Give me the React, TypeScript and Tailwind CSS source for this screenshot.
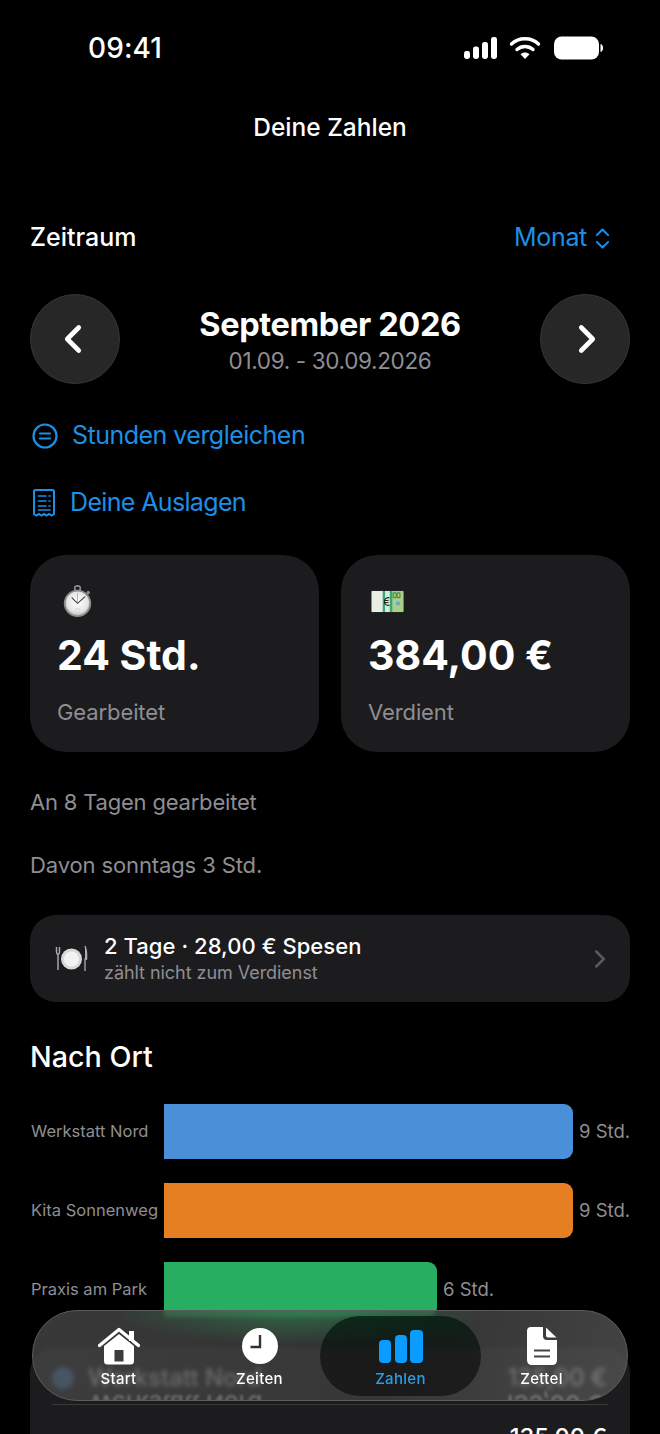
import React from "react";
import { ChevronLeft, ChevronRight, ChevronsUpDown } from "lucide-react";

const font = { fontFamily: "Inter, 'Liberation Sans', sans-serif" };

function Stopwatch() {
  return (
    <svg className="ml-[3px]" width="31" height="33" viewBox="0 0 34 36">
      <defs>
        <radialGradient id="face" cx="50%" cy="45%" r="55%">
          <stop offset="0%" stopColor="#ffffff" />
          <stop offset="80%" stopColor="#e4e4e4" />
          <stop offset="100%" stopColor="#b8b8b8" />
        </radialGradient>
      </defs>
      <rect x="14" y="1" width="6" height="5" rx="2" fill="none" stroke="#a0a0a0" strokeWidth="1.5" />
      <rect x="27" y="6" width="3.5" height="3.5" rx="1" fill="#8a8a8a" transform="rotate(40 28 8)" />
      <circle cx="17" cy="20" r="15" fill="#8d8d8d" />
      <circle cx="17" cy="20" r="13" fill="url(#face)" />
      <path d="M17 20 L25 13" stroke="#3a3f4a" strokeWidth="1.2" strokeLinecap="round" />
      <path d="M17 20 L11 14" stroke="#3a3f4a" strokeWidth="1.2" strokeLinecap="round" />
      <path d="M17 20 L17 9" stroke="#d98a55" strokeWidth="0.8" />
      <circle cx="17" cy="28" r="2.5" fill="none" stroke="#c8c8c8" strokeWidth="0.7" />
    </svg>
  );
}

function Money() {
  return (
    <svg className="ml-[1px]" width="33" height="23" viewBox="0 0 34 24">
      <rect x="0.5" y="1" width="33" height="22" rx="1" fill="#dfe8d8" />
      <rect x="0.5" y="1" width="12" height="22" fill="#e9efe3" />
      <rect x="21" y="1" width="12.5" height="22" fill="#a9cf8a" />
      <rect x="12" y="1" width="2.6" height="22" fill="#37a86f" />
      <rect x="14.6" y="1" width="4.8" height="22" fill="#dce7df" />
      <rect x="19.4" y="1" width="2.6" height="22" fill="#37a86f" />
      <path d="M19 8.2 A4 4 0 1 0 19 15.8 M13.5 11 H18 M13.5 13 H18" fill="none" stroke="#222" strokeWidth="1.2" />
      <circle cx="28" cy="14" r="2.2" fill="#6fa6d0" />
      <path d="M23 3 h3 v5 h-3z M27 3 h3 v5 h-3z" fill="none" stroke="#3d7a45" strokeWidth="1" />
    </svg>
  );
}

function Plate() {
  return (
    <svg width="33" height="27" viewBox="0 0 33 27">
      <circle cx="16.5" cy="14" r="10.5" fill="#d8d8d8" />
      <circle cx="16.5" cy="14" r="7.5" fill="#f2f2f2" />
      <path d="M1.5 2 V7 Q1.5 9 3 9.5 L3 25 M4.5 2 V7 Q4.5 9 3 9.5" fill="none" stroke="#a9b0b3" strokeWidth="1.4" />
      <path d="M30 1 Q32 6 31.6 14 L30 14 V26" fill="#aab2b5" stroke="#aab2b5" strokeWidth="1.3" />
    </svg>
  );
}

function Stat({ icon, value, label }: { icon: React.ReactNode; value: string; label: string }) {
  return (
    <div className="flex h-[197px] flex-col rounded-[36px] bg-[#1c1c1e] pl-[27px]">
      <div className="mt-[28px] flex h-[36px] items-center pl-[2px]">{icon}</div>
      <div className="mt-[9px] flex h-[54px] items-center text-[41px] font-bold leading-none text-white">{value}</div>
      <div className="mt-[15px] text-[22px] leading-[30px] tracking-[-0.1px] text-[#8e8e93]">{label}</div>
    </div>
  );
}

function Bar({ label, value, width, color }: { label: string; value: string; width: string; color: string }) {
  return (
    <div className="flex h-[55px] items-center">
      <div className="w-[134px] pl-px text-[16.5px] text-[#8e8e93]">{label}</div>
      <div className={`h-full rounded-r-[9px] ${width} ${color}`} />
      <div className="ml-[6px] text-[18.5px] text-[#8e8e93]">{value}</div>
    </div>
  );
}

function Tab({ label, children, active }: { label: string; children: React.ReactNode; active?: boolean }) {
  return (
    <div className="relative flex flex-col items-center">
      {active && <div className="absolute -left-[10px] -right-[10px] top-[5px] h-[80px] rounded-[40px] bg-[linear-gradient(180deg,rgba(0,25,12,0.75),rgba(8,8,8,0.62)_55%)]" />}
      <div className="relative mt-[16px] flex h-[38px] items-center">{children}</div>
      <div className={`relative mt-[3px] text-[15px] font-medium tracking-[0.3px] ${active ? "text-[#2a9fe8]" : "text-white"}`}>{label}</div>
    </div>
  );
}

export default function App() {
  return (
    <div className="relative h-[1434px] w-[660px] overflow-hidden bg-black" style={font}>
      <div className="flex h-[96px] items-center justify-between pl-[88px] pr-[57px]">
        <div className="text-[28px] font-medium tracking-[0.1px] text-white">09:41</div>
        <div className="flex items-center">
          <svg width="34" height="22" viewBox="0 0 34 22" fill="white">
            <rect x="0" y="14" width="6" height="8" rx="2.4" />
            <rect x="9" y="9.5" width="6" height="12.5" rx="2.4" />
            <rect x="18" y="5" width="6" height="17" rx="2.4" />
            <rect x="27" y="0" width="6" height="22" rx="2.4" />
          </svg>
          <svg className="ml-[11px]" width="32" height="24" viewBox="0 0 32 24" fill="none" stroke="white" strokeWidth="3.4" strokeLinecap="round">
            <path d="M2.5 8 C9.5 1 22.5 1 29.5 8" />
            <path d="M8 13.5 C12.5 9.5 19.5 9.5 24 13.5" />
            <path d="M16 23 L11.5 18.2 C14 16 18 16 20.5 18.2 Z" fill="white" stroke="none" />
          </svg>
          <svg className="ml-[13px]" width="49" height="24" viewBox="0 0 49 24" fill="white">
            <rect x="0" y="0.5" width="45" height="23" rx="7.5" />
            <path d="M46.5 8 C48.3 8.6 49 10 49 12 C49 14 48.3 15.4 46.5 16 Z" />
          </svg>
        </div>
      </div>

      <div className="flex h-[62px] items-center justify-center text-[24.5px] font-medium text-white">Deine Zahlen</div>

      <div className="mt-[60px] flex h-[40px] items-center justify-between pl-[30px] pr-[44px]">
        <div className="text-[25px] font-medium text-white">Zeitraum</div>
        <div className="flex items-center gap-[2px] text-[25px] tracking-[-0.3px] text-[#1c8fe6]">
          Monat
          <ChevronsUpDown size={27} strokeWidth={1.8} />
        </div>
      </div>

      <div className="mt-[36px] flex items-start justify-between px-[30px]">
        <div className="flex h-[90px] w-[90px] items-center justify-center rounded-full border border-[#363636] bg-[#272727]">
          <ChevronLeft size={46} strokeWidth={2.4} className="-translate-x-[2px] text-white" />
        </div>
        <div className="flex flex-col items-center">
          <div className="mt-[10px] h-[42px] text-[32.5px] font-bold leading-[42px] tracking-[-0.35px] text-white">September 2026</div>
          <div className="h-[30px] text-[22.5px] leading-[30px] tracking-[-0.35px] text-[#8e8e93]">01.09. - 30.09.2026</div>
        </div>
        <div className="flex h-[90px] w-[90px] items-center justify-center rounded-full border border-[#363636] bg-[#272727]">
          <ChevronRight size={46} strokeWidth={2.4} className="translate-x-[2px] text-white" />
        </div>
      </div>

      <div className="mt-[32px] flex h-[40px] items-center gap-[14px] pl-[32px] text-[25px] tracking-[-0.52px] text-[#1c8fe6]">
        <svg width="26" height="26" viewBox="0 0 26 26" fill="none" stroke="currentColor" strokeWidth="2.2" strokeLinecap="round">
          <circle cx="13" cy="13" r="11.5" />
          <path d="M8 10.5 H18 M8 15.5 H18" />
        </svg>
        Stunden vergleichen
      </div>

      <div className="mt-[27px] flex h-[40px] items-center gap-[15px] pl-[33px] text-[25px] tracking-[-0.65px] text-[#1c8fe6]">
        <svg width="22" height="28" viewBox="0 0 22 28" fill="none" stroke="currentColor" strokeWidth="2" strokeLinecap="round">
          <path d="M1 25 V2.5 Q1 1 2.5 1 H19.5 Q21 1 21 2.5 V25 L18.5 26.5 L16 25 L13.5 26.5 L11 25 L8.5 26.5 L6 25 L3.5 26.5 Z" />
          <path d="M5.5 7 H13 M16 7 H17 M5.5 12 H13 M16 12 H17 M5.5 17 H13 M16 17 H17 M5.5 21 H17" strokeWidth="1.6" />
        </svg>
        Deine Auslagen
      </div>

      <div className="mt-[32px] grid grid-cols-2 gap-[22px] px-[30px]">
        <Stat icon={<Stopwatch />} value="24 Std." label="Gearbeitet" />
        <Stat icon={<Money />} value="384,00 €" label="Verdient" />
      </div>

      <div className="mt-[35px] h-[30px] pl-[30px] text-[22px] leading-[30px] tracking-[-0.2px] text-[#8e8e93]">An 8 Tagen gearbeitet</div>
      <div className="mt-[33px] h-[30px] pl-[30px] text-[22px] leading-[30px] tracking-[-0.12px] text-[#8e8e93]">Davon sonntags 3 Std.</div>

      <div className="mx-[30px] mt-[35px] flex h-[87px] items-center rounded-[26px] bg-[#1c1c1e] pl-[25px] pr-[15px]">
        <Plate />
        <div className="ml-[16px] flex-1">
          <div className="-mt-[1px] h-[30px] text-[22px] font-medium leading-[30px] tracking-[0.05px] text-white">2 Tage · 28,00 € Spesen</div>
          <div className="h-[24px] text-[18px] leading-[24px] tracking-[-0.05px] text-[#8e8e93]">zählt nicht zum Verdienst</div>
        </div>
        <ChevronRight size={30} strokeWidth={2} className="text-[#5a5a5e]" />
      </div>

      <div className="mt-[35px] h-[40px] pl-[30px] text-[28.7px] font-medium leading-[40px] text-white">Nach Ort</div>

      <div className="mt-[27px] flex flex-col gap-[24px] pl-[30px]">
        <Bar label="Werkstatt Nord" value="9 Std." width="w-[409px]" color="bg-[#4a90d9]" />
        <Bar label="Kita Sonnenweg" value="9 Std." width="w-[409px]" color="bg-[#e67e22]" />
        <Bar label="Praxis am Park" value="6 Std." width="w-[273px]" color="bg-[#27ae60]" />
      </div>

      <div className="mx-[30px] mt-[30px] h-[200px] rounded-t-[26px] bg-[#1c1c1e] px-[22px]">
        <div className="flex h-[58px] items-center border-b border-[#38383a] pt-[4px] text-[24px] font-medium text-white">
          <div className="mr-[14px] h-[22px] w-[22px] rounded-full bg-[#4a90d9]" />
          Werkstatt Nord
          <div className="ml-auto mr-[1px]">135,00 €</div>
        </div>
        <div className="mr-[1px] mt-[14px] flex justify-end text-[23.5px] font-medium text-white">135,00 €</div>
      </div>

      <div className="absolute left-[32px] top-[1310px] h-[91px] w-[596px] overflow-hidden rounded-[45px] border border-[#5c5c5c] bg-[linear-gradient(100deg,rgba(70,70,70,0.8)_0%,rgba(62,62,62,0.8)_60%,rgba(84,84,84,0.8)_100%)] backdrop-blur-[2px]">
        <div className="absolute inset-0 bg-[radial-gradient(ellipse_190px_34px_at_45%_0px,rgba(39,174,96,0.42),rgba(39,174,96,0))]" />
        <div className="absolute left-[56px] top-[74px] -scale-y-100 text-[24px] font-medium text-white/25 blur-[1px]">Werkstatt Nord</div>
        <div className="absolute right-[24px] top-[74px] -scale-y-100 text-[24px] font-medium text-white/25 blur-[1px]">135,00 €</div>
        <div className="relative grid grid-cols-4 px-[15px]">
          <Tab label="Start">
            <svg width="42" height="38" viewBox="0 0 42 38" fill="white">
              <path d="M1.5 18.5 L21 2.5 L40.5 18.5" fill="none" stroke="white" strokeWidth="3.4" strokeLinecap="round" strokeLinejoin="round" />
              <rect x="31" y="4" width="5" height="10" />
              <path fillRule="evenodd" d="M6 19 L21 7 L36 19 V34 Q36 37.5 32.5 37.5 H9.5 Q6 37.5 6 34 Z M16.5 23 V34.5 H25.5 V23 Z" />
            </svg>
          </Tab>
          <Tab label="Zeiten">
            <svg width="36" height="36" viewBox="0 0 36 36">
              <circle cx="18" cy="18" r="18" fill="white" />
              <path d="M18 7 V19 H8.5" fill="none" stroke="#333" strokeWidth="2.4" />
            </svg>
          </Tab>
          <Tab label="Zahlen" active>
            <svg width="44" height="33" viewBox="0 0 44 33" fill="#0a9cff">
              <rect x="0" y="10" width="12" height="23" rx="4" />
              <rect x="16" y="5" width="12" height="28" rx="4" />
              <rect x="31" y="0" width="13" height="33" rx="4" />
            </svg>
          </Tab>
          <Tab label="Zettel">
            <svg width="30" height="38" viewBox="0 0 30 38">
              <path fill="white" d="M4 0 H16 V9 Q16 13 20 13 H30 V33 Q30 38 25 38 H5 Q0 38 0 33 V4 Q0 0 4 0 Z" />
              <path fill="white" d="M19 0.5 L29.5 10.5 H21 Q19 10.5 19 8.5 Z" />
              <path d="M7 23.5 H23 M7 29.5 H23" stroke="#444" strokeWidth="2" />
            </svg>
          </Tab>
        </div>
      </div>
    </div>
  );
}
